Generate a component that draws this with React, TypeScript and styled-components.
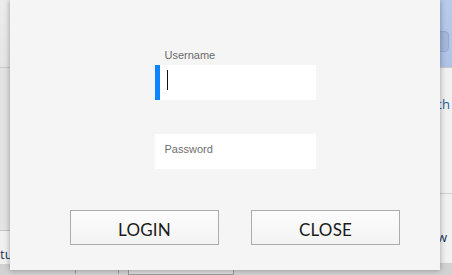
import styled, { createGlobalStyle } from "styled-components";

const GlobalStyle = createGlobalStyle`
  html, body {
    margin: 0;
    padding: 0;
    overflow: hidden;
  }
  body {
    font-family: "Liberation Sans", Arial, sans-serif;
  }
`;

const Backdrop = styled.div`
  position: relative;
  width: 452px;
  height: 275px;
  overflow: hidden;
  background: #f1f1f1;
  display: flex;
  flex-direction: column;
`;

const Header = styled.div`
  display: flex;
  height: 74px;
  border-bottom: 1px solid #c9c9c9;
  box-sizing: border-box;
`;

const HeaderSide = styled.div`
  flex: 1;
  background: linear-gradient(#ececec, #e6e6e6);
`;

const HeaderBlue = styled.div`
  width: 160px;
  background: linear-gradient(#b9cbec, #aec3e7);
  display: flex;
  justify-content: flex-end;
  align-items: flex-start;
  padding: 31px 3px 0 0;
  box-sizing: border-box;
`;

const HeaderButton = styled.div`
  width: 40px;
  height: 21px;
  border-radius: 4px;
  background: #a4b7dc;
  border: 1px solid #97aad0;
  box-sizing: border-box;
`;

const Body = styled.div`
  display: flex;
  height: 196px;
`;

const LeftCol = styled.div`
  width: 226px;
  display: flex;
  flex-direction: column;
`;

const GrayBlock = styled.div`
  height: 162px;
  background: #e3e3e3;
  border-bottom: 1px solid #c4c4c4;
`;

const SideText = styled.div<{ $color?: string; $indent?: number }>`
  font-family: "Open Sans", "Liberation Sans", sans-serif;
  font-size: 13px;
  line-height: 18px;
  color: ${(p) => p.$color || "#1d3557"};
  white-space: nowrap;
  padding-left: ${(p) => p.$indent || 0}px;
`;

const LeftText = styled(SideText)`
  padding-top: 14px;
`;

const RightCol = styled.div`
  flex: 1;
  display: flex;
  flex-direction: column;
`;

const RightRow = styled.div<{ $h: number; $top: number }>`
  height: ${(p) => p.$h}px;
  padding-top: ${(p) => p.$top}px;
  border-bottom: 1px solid #cfcfcf;
  box-sizing: border-box;
`;

const BottomStrip = styled.div`
  flex: 1;
  background: #d2d2d2;
  display: flex;
  align-items: flex-start;
  padding-left: 75px;
`;

const Cell = styled.div<{ $w: number }>`
  width: ${(p) => p.$w}px;
  height: 10px;
  border-left: 1px solid #9c9c9c;
  box-sizing: border-box;
`;

const CellBox = styled.div`
  width: 106px;
  height: 10px;
  margin-left: 9px;
  margin-top: 1px;
  border: 1px solid #9a9a9a;
  background: #dcdcdc;
  box-sizing: border-box;
`;

const Dialog = styled.div`
  position: absolute;
  left: 10px;
  top: 0;
  width: 430px;
  height: 270px;
  background: #f5f5f5;
  box-shadow: 0 0 6px rgba(0, 0, 0, 0.35);
  box-sizing: border-box;
  padding: 48px 0 0 20px;
  display: flex;
  flex-direction: column;
  align-items: center;
`;

const Form = styled.div`
  display: flex;
  flex-direction: column;
  width: 161px;
`;

const Label = styled.div`
  font-size: 11px;
  line-height: 14px;
  color: #6b6b6b;
  padding-left: 10px;
  margin-bottom: 3px;
`;

const Field = styled.div<{ $active?: boolean }>`
  height: 35px;
  background: #fff;
  box-sizing: border-box;
  border-left: ${(p) => (p.$active ? "5px solid #0a84ff" : "none")};
  padding-left: ${(p) => (p.$active ? "7px" : "10px")};
  display: flex;
  align-items: center;
  font-size: 11px;
  color: #6f6f6f;
  margin-bottom: ${(p) => (p.$active ? "34px" : "0")};
`;

const Caret = styled.span`
  display: block;
  width: 1px;
  height: 20px;
  background: #111;
  margin-top: -5px;
`;

const Placeholder = styled.span`
  margin-top: -5px;
`;

const Actions = styled.div`
  display: flex;
  gap: 32px;
  margin-top: 41px;
`;

const Button = styled.button`
  width: 149px;
  height: 35px;
  border: 1px solid #acacac;
  background: linear-gradient(#fcfcfc, #f3f3f3);
  font-family: Lato, "Open Sans", sans-serif;
  font-size: 17px;
  color: #1b1b1b;
  padding: 3px 0 0 0;
  letter-spacing: 0.2px;
`;

export default function App() {
  return (
    <>
      <GlobalStyle />
      <Backdrop>
        <Header>
          <HeaderSide />
          <HeaderBlue>
            <HeaderButton />
          </HeaderBlue>
        </Header>
        <Body>
          <LeftCol>
            <GrayBlock />
            <LeftText>tu</LeftText>
          </LeftCol>
          <RightCol>
            <RightRow $h={126} $top={27}>
              <SideText $color="#1f5a99" $indent={198}>with</SideText>
            </RightRow>
            <RightRow $h={70} $top={34}>
              <SideText $indent={211}>w</SideText>
            </RightRow>
          </RightCol>
        </Body>
        <BottomStrip>
          <Cell $w={43} />
          <Cell $w={1} />
          <CellBox />
        </BottomStrip>
        <Dialog>
          <Form>
            <Label>Username</Label>
            <Field $active>
              <Caret />
            </Field>
            <Field>
              <Placeholder>Password</Placeholder>
            </Field>
          </Form>
          <Actions>
            <Button>LOGIN</Button>
            <Button>CLOSE</Button>
          </Actions>
        </Dialog>
      </Backdrop>
    </>
  );
}
